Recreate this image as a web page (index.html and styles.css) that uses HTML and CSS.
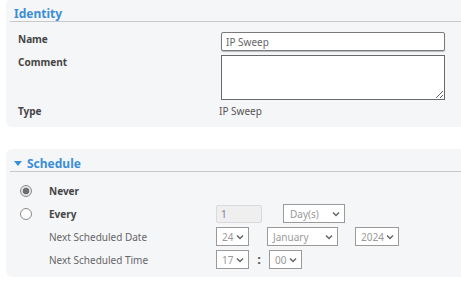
FILE: index.html
```html
<!DOCTYPE html>
<html lang="en">
<head>
    <meta charset="UTF-8">
    <title>IP Sweep</title>
    <link rel="stylesheet" href="styles.css">
</head>
<body>
    <div class="panel">
        <div class="panel-header">Identity</div>
        <div class="form-grid">
            <div class="label">Name</div>
            <input type="text" class="text-input" value="IP Sweep">
            <div class="label">Comment</div>
            <textarea class="text-area"></textarea>
            <div class="label">Type</div>
            <div class="value">IP Sweep</div>
        </div>
    </div>

    <div class="panel">
        <div class="panel-header"><span class="caret"></span>Schedule</div>
        <div class="schedule-grid">
            <span class="radio checked"></span>
            <div class="label">Never</div>
            <div></div>

            <span class="radio"></span>
            <div class="label">Every</div>
            <div class="controls">
                <div class="num-input">1</div>
                <div class="select w-unit"><span>Day(s)</span><svg viewBox="0 0 8 6"><path d="M1 1.5 L4 4.5 L7 1.5"/></svg></div>
            </div>

            <span></span>
            <div class="sub-label">Next Scheduled Date</div>
            <div class="controls">
                <div class="select w-small"><span>24</span><svg viewBox="0 0 8 6"><path d="M1 1.5 L4 4.5 L7 1.5"/></svg></div>
                <div class="select w-month"><span>January</span><svg viewBox="0 0 8 6"><path d="M1 1.5 L4 4.5 L7 1.5"/></svg></div>
                <div class="select w-year"><span>2024</span><svg viewBox="0 0 8 6"><path d="M1 1.5 L4 4.5 L7 1.5"/></svg></div>
            </div>

            <span></span>
            <div class="sub-label">Next Scheduled Time</div>
            <div class="controls time">
                <div class="select w-small"><span>17</span><svg viewBox="0 0 8 6"><path d="M1 1.5 L4 4.5 L7 1.5"/></svg></div>
                <span class="colon">:</span>
                <div class="select w-small"><span>00</span><svg viewBox="0 0 8 6"><path d="M1 1.5 L4 4.5 L7 1.5"/></svg></div>
            </div>
        </div>
    </div>
</body>
</html>
```

FILE: styles.css
```css
:root {
    --panel-bg: #f5f6f8;
    --header-blue: #3b8ed6;
    --line: #c8c9cc;
    --label: #454545;
    --muted: #666;
    --field-border: #9a9a9a;
}
body {
    margin: 0;
    background: #fff;
    font-family: "Noto Sans", sans-serif;
    font-size: 10px;
    color: var(--label);
    overflow: hidden;
}
.panel {
    background: var(--panel-bg);
    border-radius: 6px;
    margin: 0 -20px 0 6px;
    padding-bottom: 8px;
}
.panel:first-child {
    margin-top: -1px;
    padding-bottom: 9px;
}
.panel + .panel {
    margin-top: 22px;
}
.panel-header {
    display: flex;
    align-items: center;
    margin-left: 4px;
    padding: 6px 0 0 4px;
    height: 16px;
    border-bottom: 1px solid var(--line);
    color: var(--header-blue);
    font-size: 12px;
    font-weight: bold;
}
.caret {
    width: 0;
    height: 0;
    border-left: 4px solid transparent;
    border-right: 4px solid transparent;
    border-top: 5px solid var(--header-blue);
    margin: 1px 5px 0 0;
}
.form-grid {
    display: grid;
    grid-template-columns: 203px 224px;
    row-gap: 4px;
    padding: 10px 0 0 12px;
}
.label {
    font-weight: bold;
    line-height: 14px;
    color: var(--label);
}
.text-input {
    box-sizing: border-box;
    height: 19px;
    border: 1px solid #7a7a7a;
    border-radius: 2px;
    box-shadow: 0 1px 1px rgba(0, 0, 0, 0.25);
    padding: 0 4px;
    font-family: "Noto Sans", sans-serif;
    font-size: 10px;
    color: var(--muted);
    outline: none;
}
.text-area {
    box-sizing: border-box;
    height: 45px;
    border: 1px solid #6a6a6a;
    border-radius: 0;
    font-family: "Noto Sans", sans-serif;
    resize: vertical;
    outline: none;
}
.value {
    line-height: 14px;
    margin-left: -2px;
    color: #555;
}
.schedule-grid {
    display: grid;
    grid-template-columns: 29px 167px auto;
    grid-template-rows: 18px 19px 19px 19px;
    row-gap: 4px;
    align-items: center;
    padding: 10px 0 0 14px;
}
.radio {
    box-sizing: border-box;
    width: 12px;
    height: 12px;
    border-radius: 50%;
    border: 1px solid #8a8a8a;
    background: #fff;
}
.radio.checked {
    background: radial-gradient(circle, #6e6e6e 0 3.2px, #e6e6e6 3.6px);
}
.sub-label {
    color: var(--muted);
}
.controls {
    display: flex;
    align-items: center;
    gap: 18px;
}
.controls.time {
    gap: 0;
}
.num-input {
    box-sizing: border-box;
    width: 46px;
    height: 18px;
    border: 1px solid #d9d9d9;
    border-radius: 2px;
    background: #efefef;
    padding-left: 4px;
    line-height: 16px;
    color: #7b7ba5;
    margin-right: 3px;
}
.select {
    box-sizing: border-box;
    display: flex;
    align-items: center;
    justify-content: space-between;
    height: 19px;
    border: 1px solid var(--field-border);
    background: #fff;
    padding: 0 4px 0 5px;
    color: #999;
}
.select svg {
    width: 8px;
    height: 6px;
    fill: none;
    stroke: #666;
    stroke-width: 1.5;
}
.w-unit { width: 62px; padding-left: 6px; }
.w-small { width: 33px; }
.w-month { width: 71px; }
.w-year { width: 44px; margin-left: -1px; }
.colon {
    width: 20px;
    text-align: center;
    font-size: 13px;
    font-weight: bold;
    color: #555;
    line-height: 19px;
}
```
